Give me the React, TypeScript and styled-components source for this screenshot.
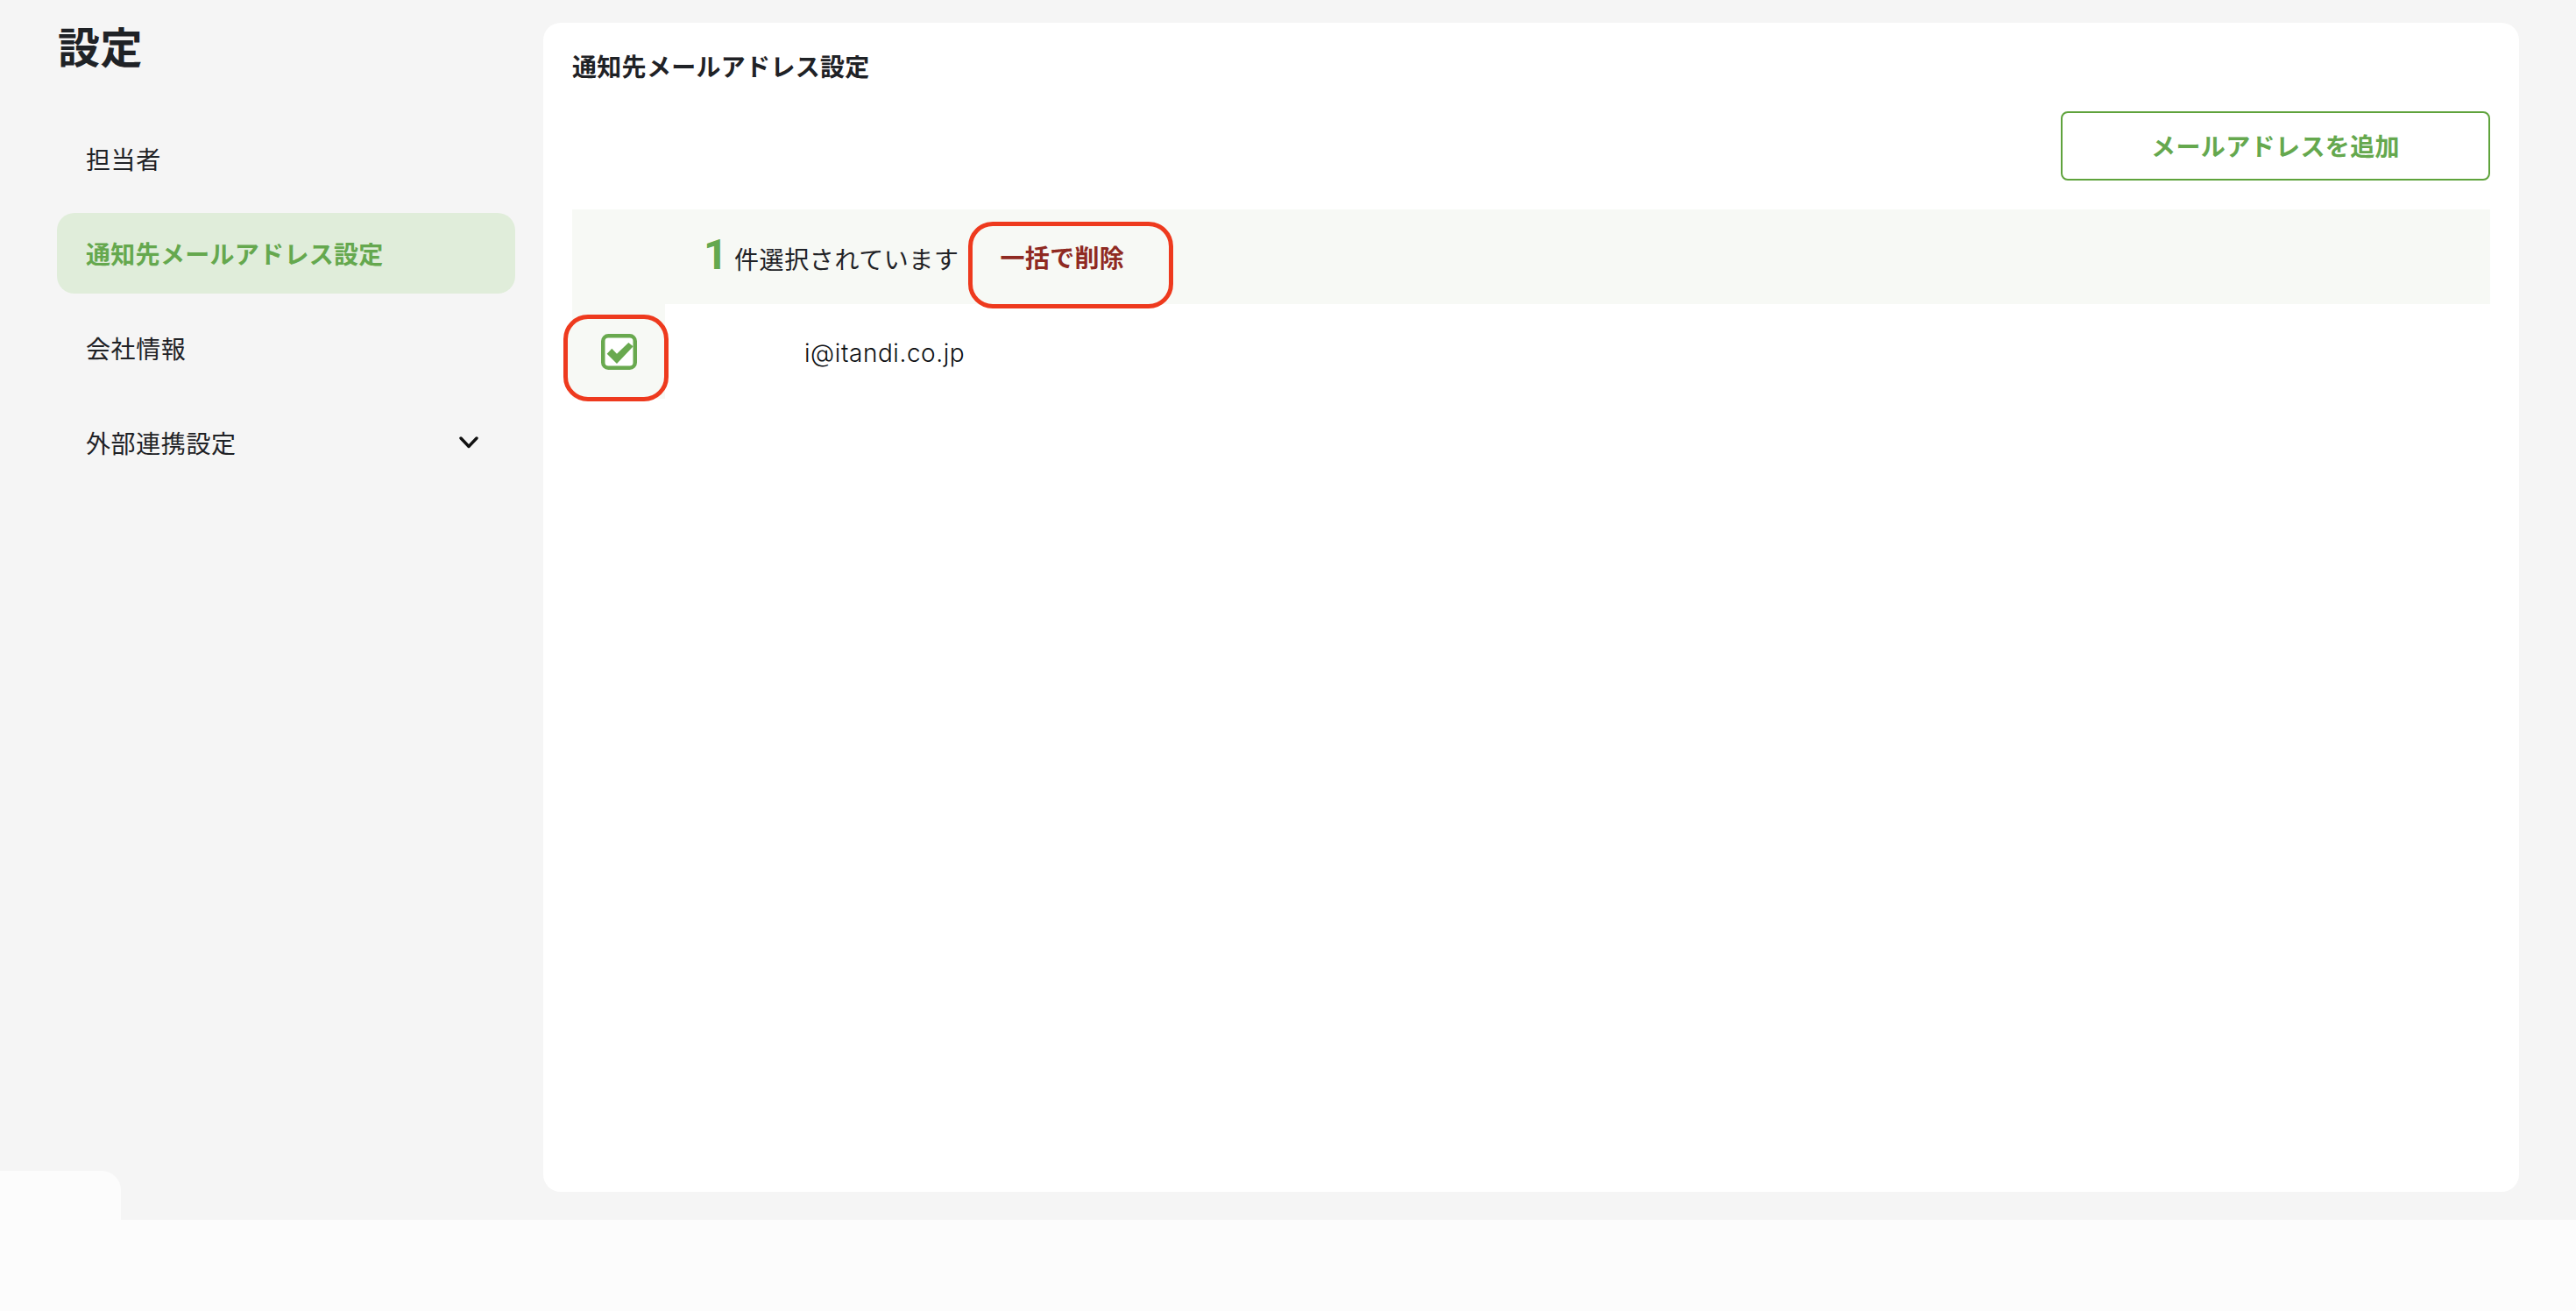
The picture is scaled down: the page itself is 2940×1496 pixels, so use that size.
import { createGlobalStyle, styled } from 'styled-components'

const GlobalStyle = createGlobalStyle`
  html, body {
    margin: 0;
    padding: 0;
  }
  body {
    background: #f5f5f5;
    font-family: Inter, "Noto Sans CJK JP", sans-serif;
    color: #1f2226;
  }
  * {
    box-sizing: border-box;
  }
`

const Page = styled.div`
  position: relative;
  width: 2940px;
  height: 1496px;
  overflow: hidden;
  background: #f5f5f5;
`

const Main = styled.div`
  display: flex;
  height: 1392px;
  padding: 26px 65px 32px 65px;
  column-gap: 32px;
`

const Sidebar = styled.aside`
  width: 523px;
  flex-shrink: 0;
`

const Title = styled.h1`
  margin: 0 0 51px;
  padding-left: 1px;
  font-size: 48px;
  line-height: 58px;
  font-weight: 700;
  letter-spacing: 0.5px;
  color: #1f2226;
`

const Nav = styled.nav`
  display: flex;
  flex-direction: column;
  row-gap: 16px;
`

const NavItem = styled.div<{ $active?: boolean }>`
  display: flex;
  align-items: center;
  justify-content: space-between;
  height: 92px;
  padding: 0 41px 0 33px;
  border-radius: 20px;
  font-size: 28px;
  font-weight: ${(p) => (p.$active ? 700 : 400)};
  letter-spacing: ${(p) => (p.$active ? 0.3 : 0.6)}px;
  color: ${(p) => (p.$active ? '#65a84e' : '#1f2226')};
  background: ${(p) => (p.$active ? '#e0edda' : 'transparent')};
`

const Panel = styled.main`
  flex: 1;
  height: 1334px;
  padding: 0 33px;
  background: #ffffff;
  border-radius: 20px;
`

const PanelTitle = styled.h2`
  margin: 0;
  padding-top: 34px;
  font-size: 28px;
  line-height: 34px;
  font-weight: 700;
  letter-spacing: 0.3px;
  color: #1f2226;
`

const Actions = styled.div`
  display: flex;
  justify-content: flex-end;
  margin-top: 33px;
`

const AddButton = styled.button`
  width: 490px;
  height: 79px;
  padding-bottom: 2px;
  background: #ffffff;
  border: 2px solid #5fa33c;
  border-radius: 8px;
  font: inherit;
  font-size: 28px;
  font-weight: 700;
  letter-spacing: 0.4px;
  color: #65a84e;
`

const SelectionBar = styled.div`
  display: flex;
  align-items: center;
  height: 108px;
  margin-top: 33px;
  padding-left: 150px;
  background: #f7f9f5;
`

const Count = styled.span`
  width: 35px;
  margin-top: -4px;
  font-family: Roboto, sans-serif;
  font-size: 48px;
  line-height: 60px;
  font-weight: 700;
  color: #65a84e;
`

const SelectionText = styled.span`
  margin-top: 4px;
  font-size: 28px;
  letter-spacing: 0.6px;
`

const BulkDelete = styled.span`
  margin-left: 47px;
  font-size: 28px;
  font-weight: 700;
  letter-spacing: 0.3px;
  color: #8f2a22;
`

const Row = styled.div`
  display: flex;
  align-items: center;
`

const CheckCell = styled.div`
  display: flex;
  align-items: center;
  width: 106px;
  height: 108px;
  padding-left: 33px;
  background: #f7f9f5;
`

const Email = styled.span`
  margin: 3px 0 0 159px;
  font-size: 28px;
  font-weight: 300;
  letter-spacing: 0.55px;
  color: #0d0f12;
`

const Highlight = styled.div<{ $x: number; $y: number; $w: number; $h: number }>`
  position: absolute;
  left: ${(p) => p.$x}px;
  top: ${(p) => p.$y}px;
  width: ${(p) => p.$w}px;
  height: ${(p) => p.$h}px;
  border: 5.5px solid #ee3a1e;
  border-radius: 28px;
  background: #f7f9f5;
`

const Footer = styled.div`
  height: 104px;
  background: #fcfcfc;
`

const FooterTab = styled.div`
  position: absolute;
  left: 0;
  top: 1336px;
  width: 138px;
  height: 60px;
  background: #fcfcfc;
  border-top-right-radius: 22px;
`

const Overlaid = styled.div`
  position: relative;
  z-index: 1;
  display: flex;
`

const Chevron = () => (
  <svg width="24" height="16" viewBox="0 0 24 16" fill="none">
    <path d="M3 3l9 9.5L21 3" stroke="#111" strokeWidth="3.4" strokeLinecap="round" strokeLinejoin="round" />
  </svg>
)

const CheckedBox = () => (
  <svg width="41" height="41" viewBox="0 0 41 41" fill="none">
    <rect x="2.25" y="2.25" width="36.5" height="36.5" rx="6" fill="#fff" stroke="#69a94f" strokeWidth="4.5" />
    <path d="M12.3 16.7L6.7 22.7 18 34 36.7 14.3 31.3 10 18 22.7z" fill="#69a94f" />
  </svg>
)

const navItems = ['担当者', '通知先メールアドレス設定', '会社情報', '外部連携設定']

export default function App() {
  return (
    <Page>
      <GlobalStyle />
      <Main>
        <Sidebar>
          <Title>設定</Title>
          <Nav>
            {navItems.map((item, i) => (
              <NavItem key={item} $active={i === 1}>
                {item}
                {i === 3 && <Chevron />}
              </NavItem>
            ))}
          </Nav>
        </Sidebar>
        <Panel>
          <PanelTitle>通知先メールアドレス設定</PanelTitle>
          <Actions>
            <AddButton>メールアドレスを追加</AddButton>
          </Actions>
          <SelectionBar>
            <Count>1</Count>
            <SelectionText>件選択されています</SelectionText>
            <Overlaid>
              <BulkDelete>一括で削除</BulkDelete>
            </Overlaid>
          </SelectionBar>
          <Row>
            <CheckCell>
              <Overlaid>
                <CheckedBox />
              </Overlaid>
            </CheckCell>
            <Email>i@itandi.co.jp</Email>
          </Row>
        </Panel>
      </Main>
      <Footer />
      <FooterTab />
      <Highlight $x={1105} $y={253} $w={234} $h={99} />
      <Highlight $x={643} $y={359} $w={120} $h={99} />
    </Page>
  )
}
